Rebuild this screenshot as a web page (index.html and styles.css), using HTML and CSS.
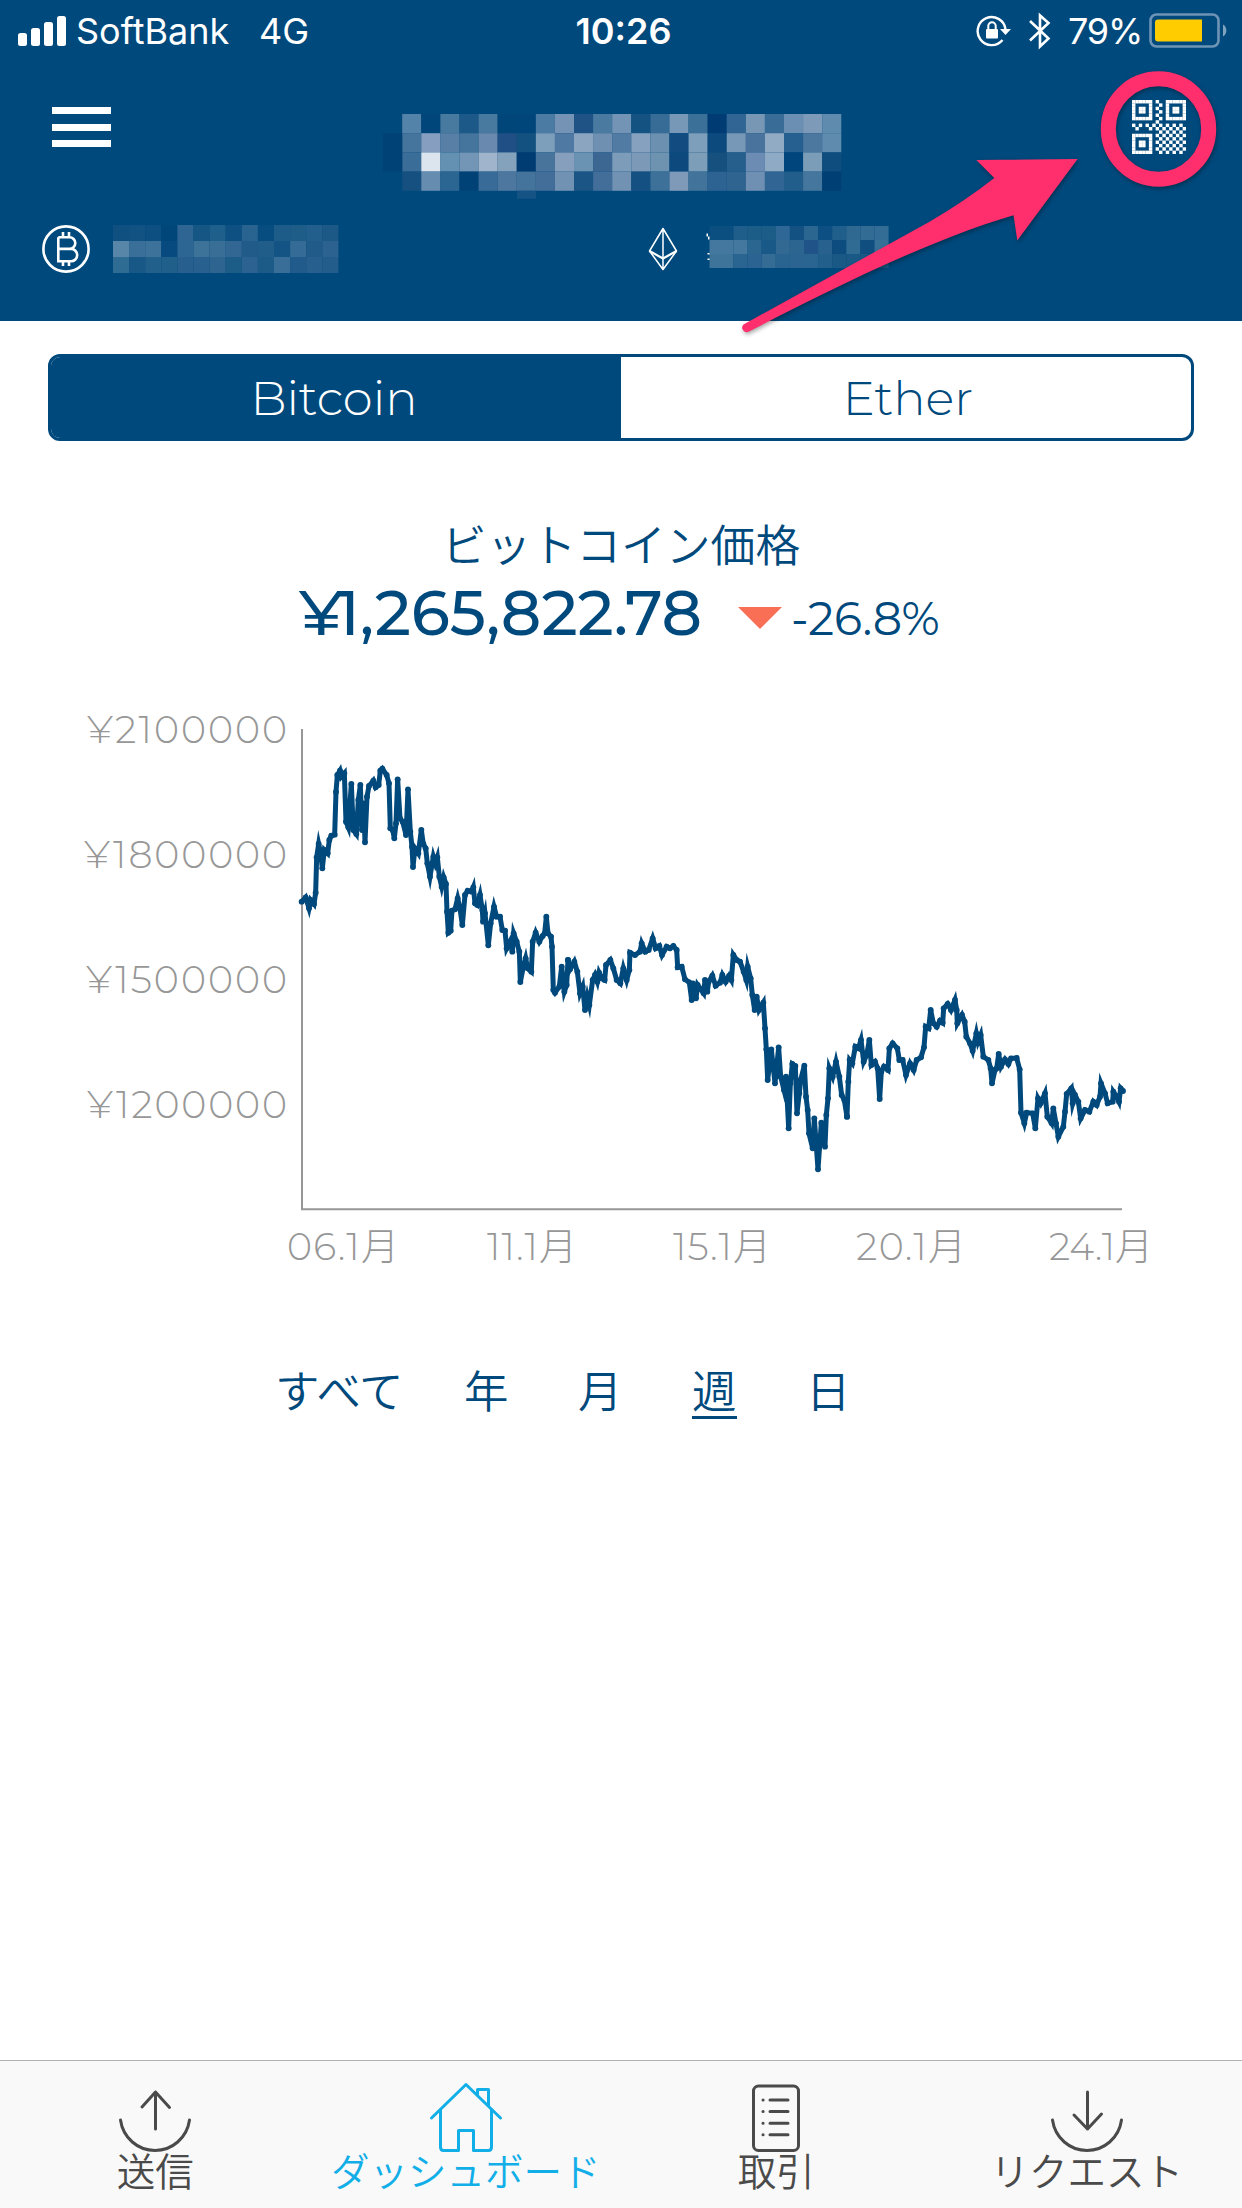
FILE: index.html
```html
<!DOCTYPE html>
<html lang="ja">
<head>
<meta charset="utf-8">
<title>Wallet</title>
<link rel="stylesheet" href="styles.css">
</head>
<body>
<div class="screen">
  <header class="header">
    <div class="status">
      <div class="status-left">
        <svg class="signal" width="48" height="30" viewBox="0 0 48 30" fill="#fff"><rect y="17" width="9" height="13" rx="2.5"/><rect x="13" y="12" width="9" height="18" rx="2.5"/><rect x="26" y="6" width="9" height="24" rx="2.5"/><rect x="39" width="9" height="30" rx="2.5"/></svg>
        <span class="carrier">SoftBank</span><span class="network">4G</span>
      </div>
      <span class="clock">10:26</span>
      <div class="status-right">
        <svg class="lock" width="36" height="32" viewBox="0 0 36 32"><path d="M29.5 14A14 14 0 1 0 26.500 25" fill="none" stroke="#fff" stroke-width="2.400"/><path d="M24 14h11l-5.500 6z" fill="#fff"/><rect x="10" y="14" width="12" height="9.500" rx="1" fill="#fff"/><path d="M12.300 15v-4a3.700 3.700 0 0 1 7.400 0v4" fill="none" stroke="#fff" stroke-width="2"/></svg>
        <svg class="bluetooth" width="24" height="38" viewBox="0 0 24 38"><path d="M2 9L20.500 26.500 12 34.500V3.500L20.500 11 2 28.500" fill="none" stroke="#fff" stroke-width="2.600"/></svg>
        <span class="percent">79%</span>
        <svg class="battery" width="80" height="36" viewBox="0 0 80 36"><rect x="1.500" y="1.500" width="68" height="32" rx="6" fill="none" stroke="#6e94b5" stroke-width="2.600"/><path d="M9 6.500H53V28.500H9a3 3 0 0 1-3-3v-16a3 3 0 0 1 3-3z" fill="#ffcc00"/><path d="M74 11.500a7 7 0 0 1 0 12z" fill="#80a4c0"/></svg>
      </div>
    </div>
    <div class="navbar">
      <div class="menu"><i></i><i></i><i></i></div>
      <svg class="mosaic total" width="460" height="86" viewBox="0 0 460 86" data-mosaic="total"></svg>
      <svg class="qr" width="54" height="54" viewBox="0 0 16 16"></svg>
    </div>
    <div class="balances">
      <svg class="btc" width="48" height="48" viewBox="0 0 48 48" fill="none" stroke="#fff" stroke-width="2.600"><circle cx="24" cy="24" r="22.600"/><path d="M16.300 12.300H27.500a5.800 5.800 0 0 1 0 11.600H16.300M27.500 23.900h1.500a6.200 6.200 0 0 1 0 12.400H16.300V12.300M21 7v5M27 7v5M21 36.500v4.500M27 36.500v4.500"/></svg>
      <svg class="mosaic" width="226" height="48" viewBox="0 0 226 48" data-mosaic="btc"></svg>
      <svg class="eth" width="30" height="44" viewBox="0 0 30 44" fill="none" stroke="#fff" stroke-width="1.500" stroke-linejoin="round"><path d="M15 1.500L1.500 24 15 42.500 28.500 24zM15 1.500V42"/><path d="M1.500 24L15 31.500 28.500 24" stroke-width="2.200"/></svg>
      <svg class="mosaic" width="190" height="48" viewBox="0 0 190 48" data-mosaic="eth"></svg>
    </div>
  </header>

  <div class="segmented"><div class="segment active">Bitcoin</div><div class="segment ether">Ether</div></div>

  <div class="price-title">ビットコイン価格</div>
  <div class="price-row">
    <span class="price"><span class="yen">¥</span>1,265,822<span class="point">.</span>78</span>
    <svg class="down" width="44" height="22" viewBox="0 0 44 22"><path d="M0 0H44L22 22z" fill="#f96f56"/></svg>
    <span class="change">-26.8%</span>
  </div>

  <svg class="chart" width="1242" height="590" viewBox="0 700 1242 590">
    <defs><marker id="dot" markerUnits="userSpaceOnUse" markerWidth="20" markerHeight="20" refX="10" refY="10"><circle cx="10" cy="10" r="8.800" fill="#00497c"/></marker></defs>
    <g class="axis-label">
      <text x="87" y="743" textLength="200">¥2100000</text>
      <text x="84" y="868" textLength="203">¥1800000</text>
      <text x="86" y="993" textLength="201">¥1500000</text>
      <text x="87" y="1118" textLength="200">¥1200000</text>
      <text x="287" y="1260" textLength="112">06.1月</text>
      <text x="487" y="1260" textLength="90">11.1月</text>
      <text x="673" y="1260" textLength="98">15.1月</text>
      <text x="856" y="1260" textLength="110">20.1月</text>
      <text x="1049" y="1260" textLength="104">24.1月</text>
    </g>
    <path d="M302 729V1209.300H1122" fill="none" stroke="#979797" stroke-width="2"/>
    <g class="line">
      <g transform="translate(290 740) scale(.33333)"><polyline points="35,485 47,472 57,505 62,480 72,492 77,458 80,352 86,312 92,340 97,385 103,330 113,340 118,300 124,287 134,284 138,156 142,105 150,92 154,110 163,100 168,245 175,262 184,132 190,270 199,282 205,180 211,135 216,270 221,190 225,307 231,170 237,138 250,122 257,142 266,135 271,92 277,86 290,105 297,130 301,265 308,270 313,295 318,250 323,118 330,235 338,245 348,285 354,148 361,275 366,320 369,381 375,325 385,340 394,270 400,312 407,325 412,370 420,410 430,350 436,370 442,352 448,410 455,440 461,412 468,432 471,515 475,578 482,572 486,512 495,508 503,475 510,505 517,555 525,465 533,452 545,455 550,442 555,490 562,495 570,465 577,510 579,545 585,520 595,616 602,550 612,500 620,530 630,530 637,570 645,572 650,625 660,605 667,635 671,580 680,605 688,635 691,726 700,680 707,655 713,685 724,695 728,605 737,578 748,605 758,588 764,580 769,530 774,580 783,590 786,620 790,750 795,758 808,740 815,680 823,755 830,735 834,660"/></g>
      <g transform="translate(560 880) scale(.33333)"><polyline points="24,240 30,268 43,245 52,275 60,340 68,320 75,390 82,350 88,375 98,300 105,285 112,305 117,278 125,295 134,300 138,255 151,240 160,265 170,300 181,310 190,265 200,300 208,270 210,218 225,225 240,215 245,190 256,215 266,210 278,175 287,205 298,198 306,225 320,200 330,205 340,198 350,210 353,262 365,260 375,298 388,307 395,360 399,310 408,355 413,315 420,325 431,340 435,300 442,335 446,305 457,287 467,317 480,308 487,285 497,305 507,288 514,300 520,225 530,240 540,245 551,275 559,300 563,260 572,295 577,345 584,390 590,350 597,390 610,368 615,445 619,508 623,600 634,508 645,610 656,502 662,590 672,630 678,590 686,745 691,610 697,552 706,558 711,700 718,640 722,600 733,557 738,650 743,690 747,760 758,805 763,715 774,868 784,728 795,800 799,705 804,655 808,565 818,590 828,545 838,590 845,645 853,660 861,710"/></g>
      <g transform="translate(840 960) scale(.33333)"><polyline points="21,470 25,365 29,300 37,310 46,260 55,265 63,240 71,305 80,285 88,240 94,315 105,305 113,325 119,417 124,335 132,320 144,330 148,265 158,250 172,265 178,300 188,300 198,345 210,310 221,330 230,300 243,292 252,262 257,200 266,205 272,150 280,190 290,200 300,182 308,188 311,145 323,132 333,150 345,120 350,150 352,190 366,165 374,185 379,230 390,250 398,272 409,220 414,245 422,225 430,290 445,300 452,325 456,370 465,330 470,325 476,282 483,320 495,298 505,312 513,295 530,294 539,328 543,458 553,490 560,458 578,460 586,505 594,415 602,430 615,400 622,470 635,490 640,445 648,490 655,530 670,500 675,455 680,402 694,385 698,430 705,405 715,425 722,475 735,450 748,455 760,425 770,435 780,410 783,370 795,400 803,430 818,425 820,395 830,410 837,425 842,385 849,393"/></g>
    </g>
  </svg>

  <nav class="ranges"><span class="all">すべて</span><span>年</span><span>月</span><span class="selected">週</span><span>日</span></nav>

  <nav class="tabbar">
    <div class="tab">
      <svg width="74" height="70" viewBox="0 0 74 70"><path d="M2.500 38C5 56 20 68.500 37 68.500S69 56 71.500 38M37.500 47V10M24 25L37.500 10l14 15.500"/></svg>
      <span>送信</span>
    </div>
    <div class="tab current">
      <svg width="74" height="70" viewBox="0 0 74 70"><path d="M2.500 36L37 2.500 71.500 36M11.500 27.500V65q0 3.500 3 3.500H29.500V48.500H44.500V68.500H59.500q3 0 3-3.500V27.500M48.500 12.500V7.500H59.500V23.500"/></svg>
      <span>ダッシュボード</span>
    </div>
    <div class="tab">
      <svg width="74" height="70" viewBox="0 0 74 70"><rect x="14.500" y="4" width="45" height="64.500" rx="5"/><path d="M31 18H49M31 29.600H49M31 41.200H49M31 52.800H49M24 18h.1M24 29.600h.1M24 41.200h.1M24 52.800h.1"/></svg>
      <span>取引</span>
    </div>
    <div class="tab">
      <svg width="74" height="70" viewBox="0 0 74 70"><path d="M2.500 38C5 56 20 68.500 37 68.500S69 56 71.500 38M37.500 10V47M24 33L37.500 47 51.500 32"/></svg>
      <span>リクエスト</span>
    </div>
  </nav>

  <svg class="annotation" width="1242" height="360" viewBox="0 0 1242 360">
    <circle cx="1158.500" cy="129" r="50.200" fill="none" stroke="#ff2e6c" stroke-width="15"/>
    <path d="M1077.600 159L976.300 160 994.300 178Q965 201 930 221.500L743.500 324.500A4.500 4.500 0 0 0 749 331.500C835 287 930 240 1013.500 215.300L1017.300 240.500z" fill="#ff2e6c"/>
  </svg>
</div>
<script src="script.js"></script>
</body>
</html>
```
FILE: styles.css
```css
* { box-sizing: border-box; }
body { margin: 0; background: #fff; font-family: "Montserrat", "Inter", "Noto Sans CJK JP", sans-serif; }
svg { display: block; flex: none; }
.screen { position: relative; display: flex; flex-direction: column; width: 1242px; height: 2208px; overflow: hidden; color: #00497c; }

.header { height: 321px; background: #00497c; color: #fff; }
.status { display: grid; grid-template-columns: 1fr auto 1fr; align-items: center; height: 62px; padding: 0 13px 0 18px; font-family: "Inter", sans-serif; font-size: 36px; white-space: nowrap; }
.status-left, .status-right { display: flex; align-items: center; }
.status-right { justify-content: flex-end; }
.carrier { width: 154px; margin-left: 10px; }
.network { margin-left: 29px; }
.clock { font-weight: 600; }
.bluetooth { margin-left: 16px; }
.percent { width: 72px; margin-left: 16px; letter-spacing: -1.200px; }
.battery { margin-left: 9px; }

.navbar { display: flex; height: 162px; align-items: flex-start; padding: 38px 56px 0 51.500px; }
.menu { display: flex; flex-direction: column; gap: 9.500px; width: 59px; padding-top: 7px; }
.menu i { height: 7px; background: #fff; }
.total { margin: 14px 0 0 272px; }
.qr { margin-left: auto; }

.balances { display: flex; align-items: center; height: 50px; padding-left: 42px; }
.balances .mosaic { margin-left: 23px; }
.eth { margin-left: 309px; }

.segmented { display: flex; height: 87px; margin: 33px 48px 0; border: 3px solid #00497c; border-radius: 12px; overflow: hidden; font-size: 48px; font-weight: 300; }
.segment { flex: 1; display: flex; align-items: center; justify-content: center; }
.segment.active { padding-right: 4px; background: #00497c; color: #fff; }
.ether { padding-left: 4px; }

.price-title { margin-top: 72px; height: 60px; line-height: 60px; text-align: center; font-size: 44.800px; font-weight: 350; font-family: "Noto Sans CJK JP", sans-serif; }
.price-row { display: flex; align-items: baseline; height: 76px; margin-top: 2px; padding-left: 299px; line-height: 76px; white-space: nowrap; }
.price { width: 407px; font-size: 63px; font-weight: 500; }
.yen { letter-spacing: -7px; }
.point { letter-spacing: -3px; }
.down { margin-left: 32px; position: relative; top: -6px; }
.change { margin-left: 9px; font-size: 46px; font-weight: 400; }

.chart { margin-top: 49px; }
.axis-label { fill: #979797; font-size: 38px; font-weight: 300; }
.line polyline { fill: none; stroke: #00497c; stroke-width: 15; stroke-linejoin: miter; stroke-miterlimit: 6; marker-start: url(#dot); marker-mid: url(#dot); marker-end: url(#dot); }

.ranges { display: flex; margin: 69px 0 0 275px; gap: 69px; font-family: "Noto Sans CJK JP", sans-serif; font-size: 44.500px; font-weight: 350; line-height: 60px; }
.ranges span { height: 60px; width: 45px; }
.ranges .all { width: 135px; margin-right: -15px; }
.selected { border-bottom: 3px solid #00497c; }

.tabbar { display: flex; height: 148px; margin-top: auto; border-top: 1.500px solid #b2b2b2; background: #f9f9f9; color: #4a4a4a; font-family: "Noto Sans CJK JP", sans-serif; font-size: 38.500px; font-weight: 350; }
.tab { flex: 1; display: flex; flex-direction: column; align-items: center; padding-top: 21px; line-height: 35px; white-space: nowrap; }
.tab svg { fill: none; stroke: currentColor; stroke-width: 3; stroke-linecap: round; stroke-linejoin: round; }
.current { color: #12aee8; }

.annotation { position: absolute; left: 0; top: 0; filter: drop-shadow(1px 2px 2px rgba(0, 0, 0, .35)); }
```
FILE: script.js
```js
const NS = "http://www.w3.org/2000/svg";

// Blurred balances: origin, first column width, column width, row height and cell colours.
const mosaics = {
  total: { x: 19.2, y: 0, first: 19.09, w: 19.09, h: 19.2, rows: [
    "5483a9 00467b 48799f 1d5988 48799f 004679 00467b 4b7aa3 7594b5 1f5385 4a7a9f 7494b5 145282 376c97 7898b8 3b7099 003b74 306594 7797b5 3a6c98 6a8fb2 7d9ab9 5f8baf",
    "45749c 869fc0 587fa5 45749c 6a89ae 1f4f84 135280 7e9fbb 4f78a2 8ba5c1 7090b2 527ba4 86a1bf 6c91b0 114b7f 7e9fbb 0c497d 7898b7 49739c 92abc5 256090 4c779f 5f8baf",
    "3a6d97 dce5ee 6490b1 7396b6 a0b4cb 85a2bc 003b71 48739b 869fbc 6a92b3 3d6793 7d9cb9 7c99b7 6d93b1 0d497d 7d9eb9 15507f 265f8c 6c8cb3 8faac5 00457b 7b9db8 0f4d7f",
    "155080 668db0 2b6591 004276 386b97 4e779f 44739b 436e99 7292b3 1a5585 436e99 7292b3 145182 3d7199 7f9ab8 42739a 2d6392 306490 6f90b3 316694 225e8b 45769e 003f73"] },
  btc: { x: 0, y: 0, first: 16.1, w: 16.1, h: 16, rows: [
    "0f5081 125283 0c4f80 004678 2f6592 165684 1f5f8b 0e5082 29638f 084d7f 1d5b88 1e5d88 235f8d 1c5987",
    "5886a9 396f98 3d729a 074a7f 2d6593 3e7399 396f97 326794 215b8a 205d89 145484 356b97 215b8a 2b6290",
    "2f6c94 185886 22608c 1f5f8a 275f8f 28618f 2d6490 1c5d87 2b6291 1c5b87 386e97 205b8b 275f8e 225d8b"] },
  eth: { x: 8.5, y: 1, first: 24, w: 14.1, h: 14, rows: [
    "0b4e80 1f5d8b 1c5d88 1c5d88 2f6896 145183 2b6691 0d4f82 205f8b 2f6992 326b94 336c95",
    "44789e 44789e 2a6690 195987 326992 2c6690 205488 28618e 0c4c7e 306b94 0f4e7f 367097",
    "3e739a 2a6591 2b6393 356c95 28648f 2b6491 2a6491 22608b 1a5886 1a5886 1a5886 1a5886"] }
};

function rect(svg, x, y, w, h, fill) {
  const r = document.createElementNS(NS, "rect");
  for (const [k, v] of Object.entries({ x, y, width: w, height: h, fill })) r.setAttribute(k, v);
  svg.appendChild(r);
}

for (const svg of document.querySelectorAll("[data-mosaic]")) {
  const m = mosaics[svg.dataset.mosaic];
  m.rows.forEach((row, j) => row.split(" ").forEach((c, i) => {
    const x = i ? m.x + m.first + (i - 1) * m.w : m.x;
    rect(svg, x, m.y + j * m.h, i ? m.w : m.first, m.h, "#" + c);
  }));
  if (svg.dataset.mosaic === "total") {
    rect(svg, 0, 19.2, 19.2, 38.4, "#004276");
    rect(svg, 134, 76.800, 19, 8, "#145383");
  }
  if (svg.dataset.mosaic === "eth") {
    rect(svg, 5.5, 8.5, 1.500, 3, "#fff");
    rect(svg, 7, 11.500, 1.500, 3, "#fff");
    rect(svg, 6.500, 28, 2, 1.500, "#fff");
    rect(svg, 6.500, 33.500, 2, 1.500, "#fff");
  }
}

// QR glyph on a 16-module grid.
const qr = [
  "XXXXXX X  XXXXXX",
  "X    X  X X    X",
  "X XX X X  X XX X",
  "X XX X  X X XX X",
  "X    X X  X    X",
  "XXXXXX  X XXXXXX",
  "       X        ",
  "X X X X X X X X ",
  " X   X X X X X X",
  "        X X X X ",
  "XXXXXX X X X X X",
  "X    X  X X X X ",
  "X XX X X X X X X",
  "X XX X  X X X X ",
  "X    X X X X X X",
  "XXXXXX  X X X X "
];
const glyph = document.querySelector(".qr");
qr.forEach((row, y) => [...row].forEach((c, x) => {
  if (c === "X") rect(glyph, x, y, 1.02, 1.02, "#fff");
}));
```
